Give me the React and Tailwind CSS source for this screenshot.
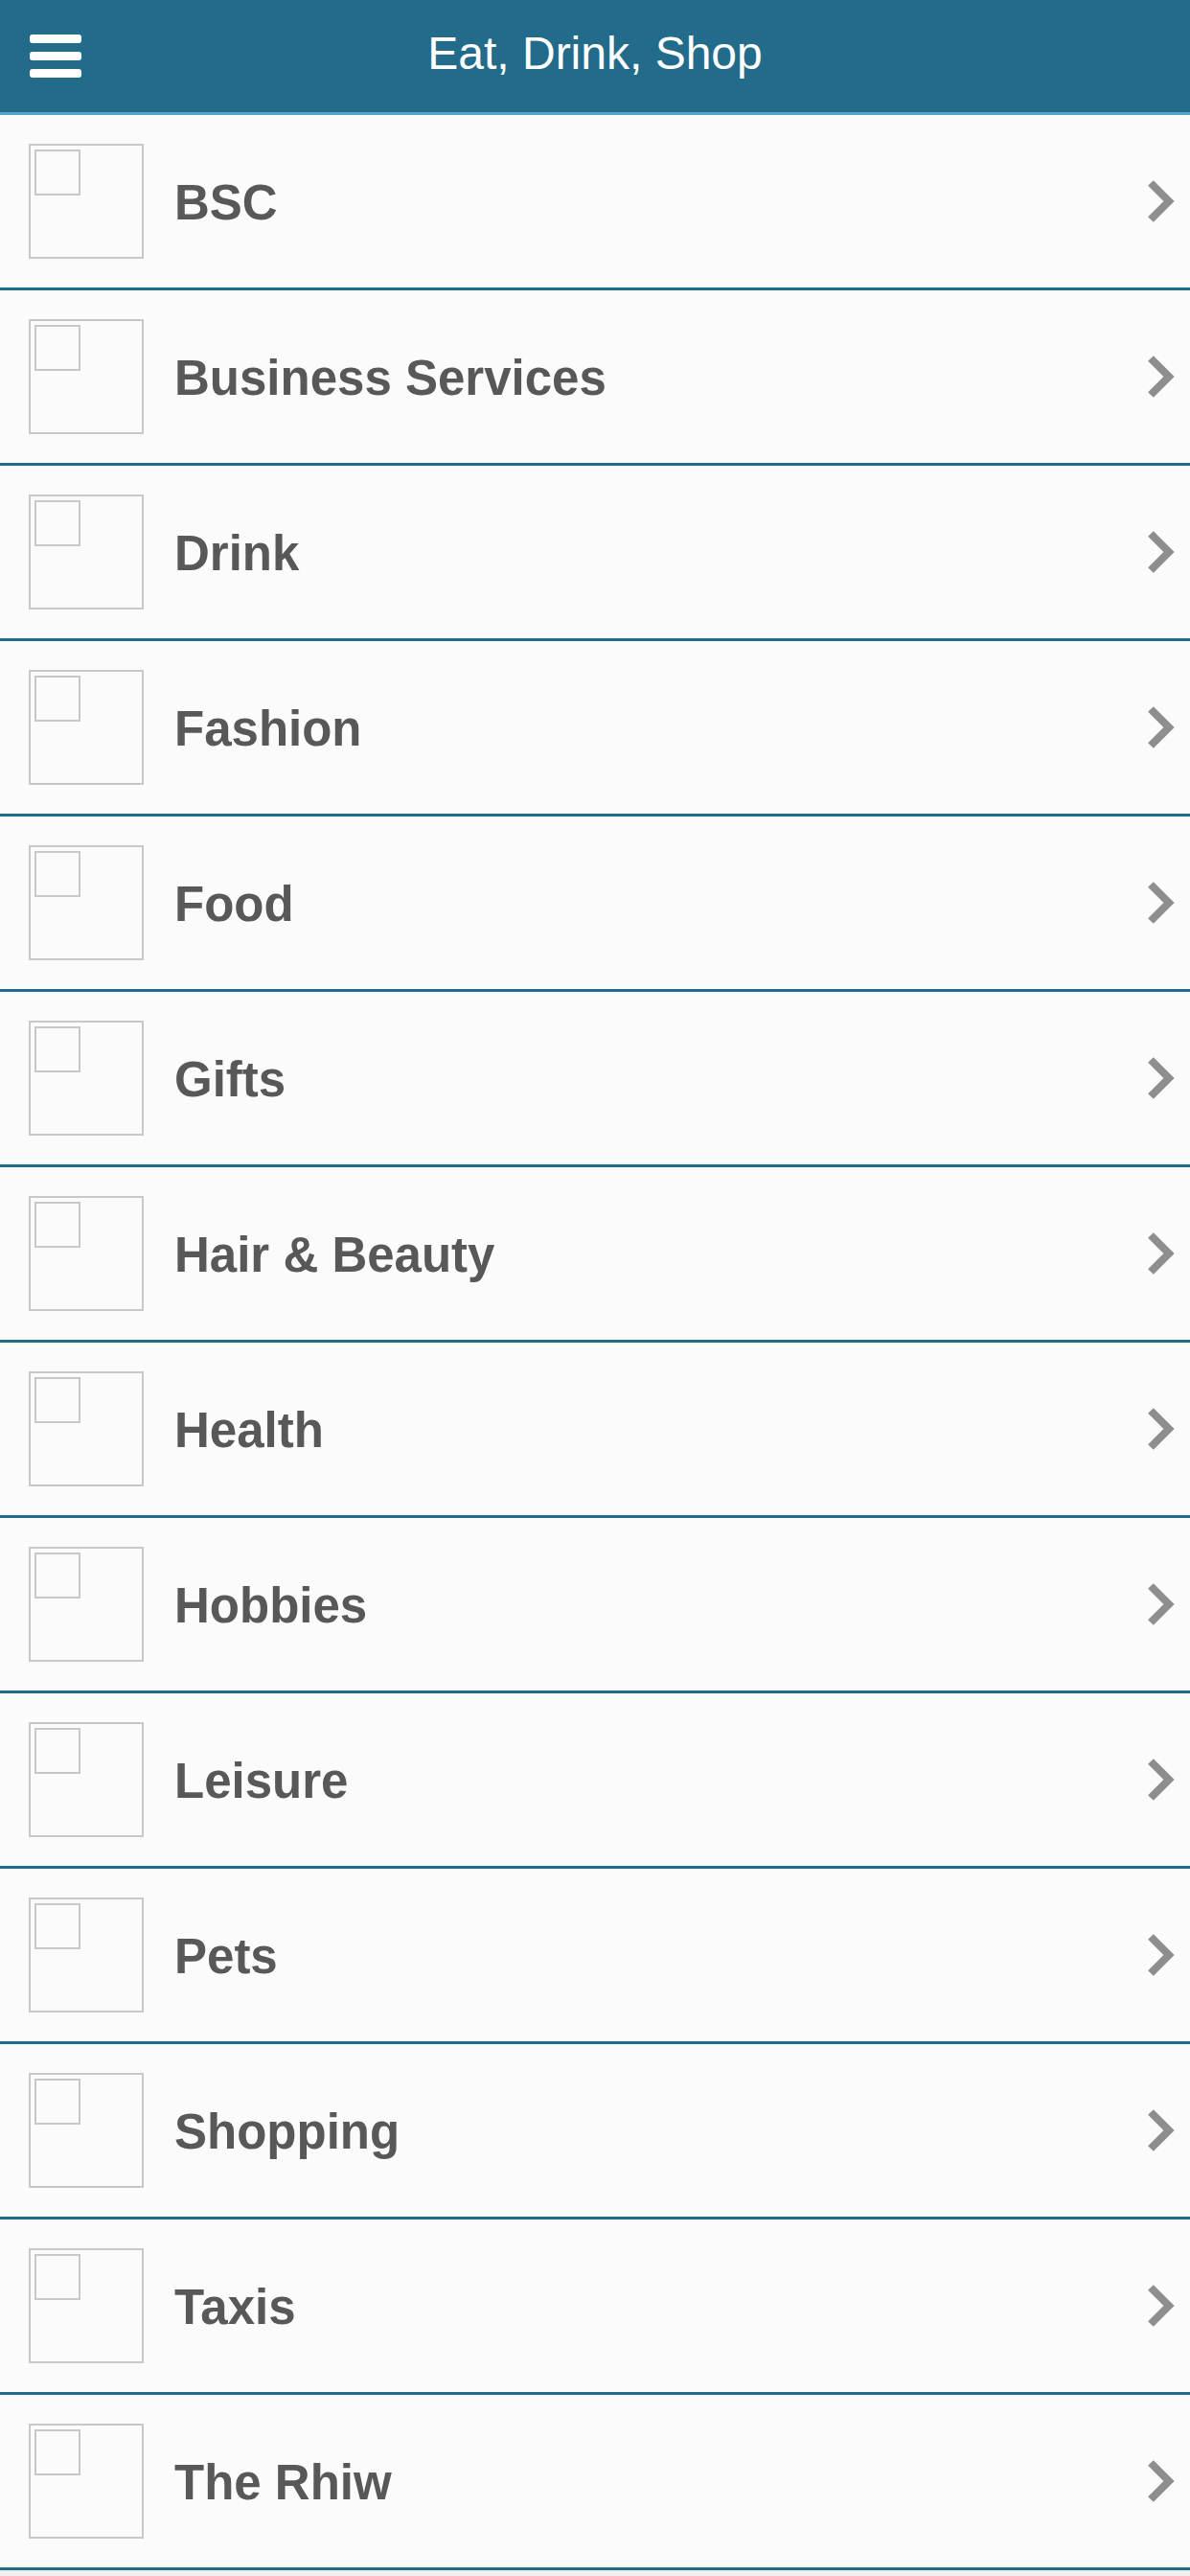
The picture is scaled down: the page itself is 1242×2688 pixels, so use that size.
import React from "react";

const items = [
  "BSC",
  "Business Services",
  "Drink",
  "Fashion",
  "Food",
  "Gifts",
  "Hair & Beauty",
  "Health",
  "Hobbies",
  "Leisure",
  "Pets",
  "Shopping",
  "Taxis",
  "The Rhiw",
];

function Chevron() {
  return (
    <svg width="32" height="46" viewBox="0 0 32 46" className="shrink-0">
      <path d="M5 4 L24 23 L5 42" fill="none" stroke="#8e8e8e" strokeWidth="8" strokeLinecap="butt" strokeLinejoin="miter" />
    </svg>
  );
}

function Row({ label }) {
  return (
    <div className="flex h-[183px] items-center border-b-[3px] border-[#1f6b8b] bg-[#fbfbfb]">
      <div className="ml-[30px] h-[120px] w-[120px] shrink-0 border-2 border-[#c8c8c8] p-[4px]">
        <div className="h-[48px] w-[48px] border-2 border-[#c8c8c8]" />
      </div>
      <div className="ml-[32px] flex-1 pt-[3px] text-[51px] font-bold leading-none text-[#585858]" style={{ fontFamily: '"Liberation Sans", Arial, sans-serif' }}>
        {label}
      </div>
      <div className="mr-[14px] flex items-center">
        <Chevron />
      </div>
    </div>
  );
}

export default function App() {
  return (
    <div className="min-h-[2688px] w-[1242px] bg-[#efefef]" style={{ fontFamily: '"Liberation Sans", Arial, sans-serif' }}>
      <div className="relative flex h-[117px] items-center justify-center bg-[#226b8a]">
        <div className="absolute left-[31px] top-[36px] flex w-[54px] flex-col gap-[9px]">
          <div className="h-[9px] rounded-[3px] bg-white" />
          <div className="h-[9px] rounded-[3px] bg-white" />
          <div className="h-[9px] rounded-[3px] bg-white" />
        </div>
        <div className="pb-[6px] text-[48px] leading-none text-white">Eat, Drink, Shop</div>
      </div>
      <div className="h-[3px] bg-[#52a6ca]" />
      <div>
        {items.map((it) => (
          <Row key={it} label={it} />
        ))}
      </div>
    </div>
  );
}
